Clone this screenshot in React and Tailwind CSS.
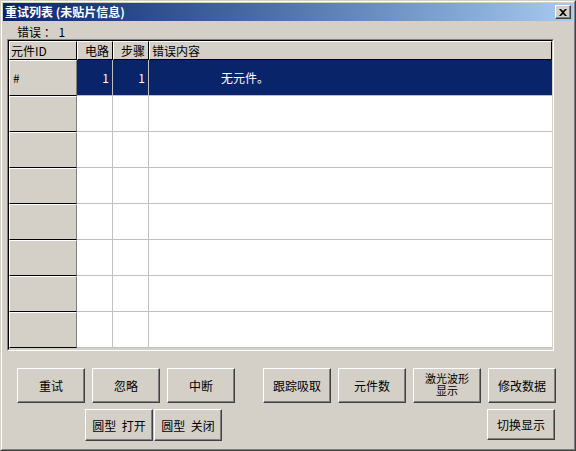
import React from 'react';

const rows = [
  { id: '#', circuit: '1', step: '1', msg: '无元件。', selected: true },
  {}, {}, {}, {}, {}, {}, {},
];

const Btn = ({ children, className = '' }) => (
  <button
    className={`flex items-center justify-center bg-[#d4d0c8] text-black text-[12px] leading-[13px] border border-t-white border-l-white border-r-[#404040] border-b-[#404040] shadow-[inset_-1px_-1px_#808080] ${className}`}
  >
    {children}
  </button>
);

export default function App() {
  return (
    <div className="w-[576px] h-[451px] bg-[#d4d0c8] border border-t-[#d4d0c8] border-l-[#d4d0c8] border-r-[#404040] border-b-[#404040] font-['Noto_Sans_CJK_SC',sans-serif] text-[12px] text-black">
      <div className="h-full border border-t-white border-l-white border-r-[#808080] border-b-[#808080] p-px flex flex-col">
        {/* title bar */}
        <div className="h-[18px] flex items-center justify-between bg-gradient-to-r from-[#0a246a] to-[#a6caf0] pl-[2px] pr-[2px]">
          <span className="text-white font-bold text-[12px] leading-[18px]">重试列表 (未贴片信息)</span>
          <div className="w-[16px] h-[14px] bg-[#d4d0c8] flex items-center justify-center border border-t-white border-l-white border-r-[#404040] border-b-[#404040] shadow-[inset_-1px_-1px_#808080]">
            <svg width="8" height="7" viewBox="0 0 8 7">
              <path d="M0 0h2l2 2 2-2h2L5 3.5 8 7H6L4 5 2 7H0l3-3.5z" fill="black" />
            </svg>
          </div>
        </div>

        <div className="pl-[14px] mt-[5px] h-[12px] leading-[12px] text-[12px] whitespace-pre">错误 ： 1</div>

        {/* grid */}
        <div className="ml-[4px] mt-[1px] w-[547px] h-[312px] border border-t-[#808080] border-l-[#808080] border-r-white border-b-white">
          <div className="h-full border border-t-black border-l-black border-r-[#d4d0c8] border-b-[#d4d0c8] bg-[#d4d0c8] flex flex-col">
            <div className="grid grid-cols-[68px_36px_36px_1fr] h-[19px]">
              <div className="pl-[1px] leading-[17px] border border-t-white border-l-white border-r-black border-b-black">元件ID</div>
              <div className="pr-[3px] text-right leading-[17px] border border-t-white border-l-white border-r-black border-b-black">电路</div>
              <div className="pr-[3px] text-right leading-[17px] border border-t-white border-l-white border-r-black border-b-black">步骤</div>
              <div className="pl-[2px] leading-[17px] border border-t-white border-l-white border-r-black border-b-black">错误内容</div>
            </div>
            {rows.map((r, i) => (
              <div key={i} className="grid grid-cols-[68px_36px_36px_1fr] h-[36px]">
                <div className="flex items-center pl-[3px] border-t border-l border-t-white border-l-white border-r border-r-[#808080] border-b border-b-black">
                  {r.id}
                </div>
                <div className={`flex items-center justify-end pr-[3px] border-r border-b border-[#c0c0c0] ${r.selected ? 'bg-[#0a246a] text-white' : 'bg-white'}`}>
                  {r.circuit}
                </div>
                <div className={`flex items-center justify-end pr-[3px] border-r border-b border-[#c0c0c0] ${r.selected ? 'bg-[#0a246a] text-white' : 'bg-white'}`}>
                  {r.step}
                </div>
                <div className={`flex items-center pl-[72px] border-b border-[#c0c0c0] ${r.selected ? 'bg-[#0a246a] text-white' : 'bg-white'}`}>
                  {r.msg}
                </div>
              </div>
            ))}
          </div>
        </div>

        {/* buttons */}
        <div className="flex mt-[17px] pl-[14px]">
          <div className="flex gap-[7px]">
            <Btn className="w-[68px] h-[35px]">重试</Btn>
            <Btn className="w-[68px] h-[35px]">忽略</Btn>
            <Btn className="w-[68px] h-[35px]">中断</Btn>
          </div>
          <div className="flex gap-[7px] ml-[28px]">
            <Btn className="w-[68px] h-[35px]">跟踪吸取</Btn>
            <Btn className="w-[68px] h-[35px]">元件数</Btn>
            <Btn className="w-[68px] h-[35px]">
              <span className="text-center text-[11px] leading-[12px] pb-[4px]">激光波形<br />显示</span>
            </Btn>
            <Btn className="w-[68px] h-[35px]">修改数据</Btn>
          </div>
        </div>
        <div className="flex mt-[6px]">
          <div className="flex ml-[82px] gap-px">
            <Btn className="w-[68px] h-[32px]">圆型&nbsp;&nbsp;打开</Btn>
            <Btn className="w-[68px] h-[32px]">圆型&nbsp;&nbsp;关闭</Btn>
          </div>
          <Btn className="w-[68px] h-[31px] ml-[265px]">切换显示</Btn>
        </div>
      </div>
    </div>
  );
}
